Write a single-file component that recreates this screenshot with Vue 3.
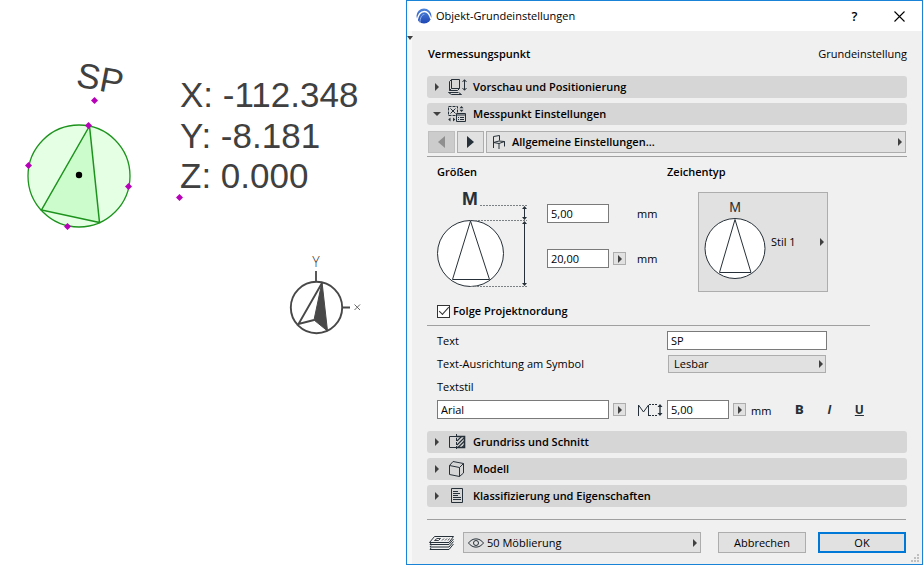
<script setup>
import { ref } from 'vue'

const handles = [
  [94, 100], [88, 125], [28, 165], [128, 186], [67, 226], [179, 197]
]
const coords = [
  { text: 'X: -112.348', y: 107 },
  { text: 'Y: -8.181', y: 148 },
  { text: 'Z: 0.000', y: 188 }
]

const textHeight = ref('5,00')
const symbolSize = ref('20,00')
const followNorth = ref(true)
const label = ref('SP')
const alignment = ref('Lesbar')
const font = ref('Arial')
const fontSize = ref('5,00')
const layer = ref('50 Möblierung')
</script>

<template>
  <main class="screen">
    <section class="plan" aria-label="Grundriss">
      <svg class="drawing" viewBox="0 0 406 565" width="406" height="565">
        <circle cx="79" cy="176" r="51" fill="#e4ffe4" stroke="#1d931d" stroke-width="1.3" />
        <path d="M89.500 126L41.500 210L99.500 222.500Z" fill="#ccfccc" stroke="#1d931d" stroke-width="1.5" />
        <circle cx="79" cy="175" r="3.200" fill="#000" />
        <text class="cad" x="75" y="86" transform="rotate(11 75 86)">SP</text>
        <text v-for="c in coords" :key="c.y" class="cad" x="180" :y="c.y">{{ c.text }}</text>
        <path
          v-for="h in handles" :key="h[0]"
          :d="`M${h[0] + 0.5} ${h[1] - 3}l3.500 3.500l-3.500 3.500l-3.500 -3.500z`" fill="#b800b8"
        />
        <g fill="none" stroke="#484848">
          <circle cx="316.500" cy="307.500" r="25.700" stroke-width="1.900" />
          <path d="M316 271V282M342 307.500H350" stroke-width="1.800" />
          <path d="M322 283L298.500 324L314 320" stroke-width="1.900" />
          <path d="M322 282L314 320L327.500 331Z" fill="#484848" />
        </g>
        <text class="axis" x="316" y="267">Y</text>
        <path d="M354.500 304.500l5.500 5.500M360 304.500l-5.500 5.500" stroke="#555" stroke-width="0.900" />
      </svg>
    </section>

    <section class="dialog" role="dialog" aria-labelledby="dialog-title">
      <header class="titlebar">
        <svg class="logo" viewBox="0 0 16 16" width="16" height="16">
          <defs>
            <linearGradient id="orb" x1="0" y1="0" x2="0" y2="1">
              <stop offset="0" stop-color="#4f86dc" /><stop offset="1" stop-color="#1f46b4" />
            </linearGradient>
          </defs>
          <circle cx="8" cy="8" r="7.500" fill="url(#orb)" />
          <path d="M1 13C2 6.500 4.500 3.500 8.500 3.500C11.500 3.500 13.500 6 15 11" fill="none" stroke="#fff" stroke-width="1.400" />
          <path d="M3.800 15C4.200 9.500 5.800 6.500 8.300 6.500" fill="none" stroke="#9dbdf0" stroke-width="0.900" />
        </svg>
        <h1 id="dialog-title">Objekt-Grundeinstellungen</h1>
        <button class="caption" type="button" aria-label="Hilfe">?</button>
        <button class="caption" type="button" aria-label="Schließen">
          <svg viewBox="0 0 11 11" width="11" height="11"><path d="M0.500 0.500L10.500 10.500M10.500 0.500L0.500 10.500" stroke="#000" stroke-width="1.100" /></svg>
        </button>
      </header>

      <div class="body">
        <div class="rail"><i class="tri down small"></i></div>
        <form class="content" @submit.prevent>
          <div class="object">
            <h2>Vermessungspunkt</h2>
            <span>Grundeinstellung</span>
          </div>

          <div class="panels">
            <button class="panel" type="button" aria-expanded="false">
              <i class="tri"></i>
              <svg class="icon" viewBox="0 0 20 20" width="20" height="20">
                <path d="M4.500 2.500H12.500V11.500H4.500ZM4.500 2.500L2.500 4.500V13.500L4.500 11.500M2.500 13.500H10.500L12.500 11.500M1.500 15.500H11M1.500 15.500L4.500 17.500H14.500L11.500 15.500" />
                <path d="M17.500 3V13M15.500 5L17.500 2.700L19.500 5M15.500 11L17.500 13.300L19.500 11" />
              </svg>
              <span>Vorschau und Positionierung</span>
            </button>
            <button class="panel" type="button" aria-expanded="true">
              <i class="tri down"></i>
              <svg class="icon" viewBox="0 0 20 20" width="20" height="20">
                <path d="M1.500 2.500H10.500V11.500H1.500Z" stroke-dasharray="3 1" />
                <path d="M3.500 4.500L8.500 9.500M8.500 4.500L3.500 9.500" />
                <path d="M12.500 4.300L14.500 2L16.500 4.300ZM12.500 5.700L14.500 8L16.500 5.700Z M3.500 13.500L1.200 15.500L3.500 17.500ZM6 13.500L8.300 15.500L6 17.500Z" fill="#263038" stroke="none" />
                <path d="M9.500 9.500H18.500V17.500H9.500ZM9.500 11H18.500" fill="#d6d6d6" />
                <path d="M11 13.500H12M13 13.500H17M11 15.500H12M13 15.500H17" />
              </svg>
              <span>Messpunkt Einstellungen</span>
            </button>
          </div>

          <nav class="pager">
            <button class="step" type="button" disabled aria-label="Zurück"><i class="tri left"></i></button>
            <button class="step" type="button" aria-label="Weiter"><i class="tri big"></i></button>
            <button class="page" type="button" aria-haspopup="menu">
              <svg class="icon" viewBox="0 0 14 16" width="14" height="16">
                <path d="M1.500 14V2.500L7.500 1.500V6.500M1.500 8.500L7 7L12.500 7.500L7 9.500L1.500 8.500M7 9.500V15M12.500 7.500V12.500" />
              </svg>
              <span>Allgemeine Einstellungen...</span>
              <i class="tri"></i>
            </button>
          </nav>

          <div class="general">
            <div class="columns">
              <section>
                <h3>Größen</h3>
                <div class="sizes">
                  <svg viewBox="0 -8 90 108" width="90" height="108">
                    <text class="mark" x="33" y="15">M</text>
                    <circle cx="33.500" cy="63.500" r="33" fill="#fff" stroke="#263038" />
                    <path d="M33.500 31L15.500 89.500H52.500Z" fill="none" stroke="#263038" />
                    <path d="M43 15.500H90M38 30.500H90M34 96.500H90" stroke="#7c8185" stroke-dasharray="2 1" />
                    <path d="M87.500 17V29M87.500 32V95" stroke="#263038" />
                    <path d="M85 19L87.500 16L90 19ZM85 27L87.500 30L90 27ZM85 34L87.500 31L90 34ZM85 93L87.500 96L90 93Z" fill="#263038" />
                  </svg>
                  <div class="dims">
                    <div class="dim">
                      <input id="text-height" v-model="textHeight" class="short" type="text" aria-label="Texthöhe">
                      <label class="unit" for="text-height">mm</label>
                    </div>
                    <div class="dim">
                      <input id="symbol-size" v-model="symbolSize" class="short" type="text" aria-label="Symbolgröße">
                      <button class="mini" type="button" aria-label="Größe wählen"><i class="tri"></i></button>
                      <label class="unit" for="symbol-size">mm</label>
                    </div>
                  </div>
                </div>
              </section>
              <section>
                <h3>Zeichentyp</h3>
                <button class="style" type="button" aria-haspopup="menu">
                  <svg viewBox="0 -8 62 96" width="62" height="96">
                    <text class="mark light" x="31" y="10">M</text>
                    <circle cx="31" cy="46.500" r="30" fill="#fff" stroke="#263038" />
                    <path d="M31 17.500L15.500 70.500H47Z" fill="none" stroke="#263038" />
                  </svg>
                  <span>Stil 1</span>
                  <i class="tri"></i>
                </button>
              </section>
            </div>

            <label class="check">
              <input v-model="followNorth" type="checkbox">
              <span>Folge Projektnordung</span>
            </label>
          </div>

          <hr class="inner">

          <div class="text">
            <div class="field">
              <label for="label-text">Text</label>
              <input id="label-text" v-model="label" class="medium" type="text">
            </div>
            <div class="field">
              <label for="alignment">Text-Ausrichtung am Symbol</label>
              <div class="picker medium">
                <select id="alignment" v-model="alignment"><option>Lesbar</option></select>
                <i class="tri"></i>
              </div>
            </div>
            <label class="caption-row" for="font">Textstil</label>
            <div class="fontrow">
              <input id="font" v-model="font" class="long" type="text">
              <button class="mini" type="button" aria-label="Schrift wählen"><i class="tri"></i></button>
              <svg class="icon height" viewBox="0 0 25 14" width="25" height="14">
                <path d="M0.500 13V2L5.500 9L10.500 2V13" />
                <path d="M11 1.500H20M11 12.500H20" stroke-dasharray="2 1" />
                <path d="M22 2V12" stroke-width="1.300" />
                <path d="M19.500 4L22 1L24.500 4ZM19.500 10L22 13L24.500 10Z" fill="#263038" stroke="none" />
              </svg>
              <input id="font-size" v-model="fontSize" class="short" type="text" aria-label="Schriftgröße">
              <button class="mini" type="button" aria-label="Schriftgröße wählen"><i class="tri"></i></button>
              <label class="fontunit" for="font-size">mm</label>
              <div class="format">
                <button type="button" class="bold">B</button>
                <button type="button" class="italic">I</button>
                <button type="button" class="underline">U</button>
              </div>
            </div>
          </div>

          <div class="panels">
            <button class="panel" type="button" aria-expanded="false">
              <i class="tri"></i>
              <svg class="icon" viewBox="0 0 20 20" width="20" height="20">
                <path d="M9.500 4.500H2.500V15.500H9.500" />
                <path d="M9.500 2V18" stroke-dasharray="3 1" />
                <path d="M9 4.500H17.500V15.500H9" stroke-width="1.600" />
                <path d="M10 9L14.500 4.500M10 13L17.500 5.500M11 15.500L17.500 9M15 15.500L17.500 13" stroke-width="1.100" />
              </svg>
              <span>Grundriss und Schnitt</span>
            </button>
            <button class="panel" type="button" aria-expanded="false">
              <i class="tri"></i>
              <svg class="icon" viewBox="0 0 20 20" width="20" height="20">
                <path d="M2.500 6.500L12.500 8.500V17.500L2.500 15.500ZM2.500 6.500L6 2.500L16.500 4.500L12.500 8.500M16.500 4.500V14L12.500 17.500" />
              </svg>
              <span>Modell</span>
            </button>
            <button class="panel" type="button" aria-expanded="false">
              <i class="tri"></i>
              <svg class="icon" viewBox="0 0 20 20" width="20" height="20">
                <path d="M4.500 2.500H15.500V16.500H4.500ZM6 5.500H11M6 7.500H13M6 9.500H11M6 11.500H14M6 13.500H14" />
              </svg>
              <span>Klassifizierung und Eigenschaften</span>
            </button>
          </div>

          <hr class="outer">

          <footer class="footer">
            <svg class="icon" viewBox="0 0 26 16" width="26" height="16">
              <path d="M0.500 7.500L5.500 1.500H24.500L20 7.500Z M1 9.500H20L24.500 4M1 12H20L24.500 6.500M1 14.500H20L24.500 9M1 9.500L2 8M1 12L2 10.500M1 14.500L2 13" />
              <path d="M5.500 5.500L8 3.500H11.500L9.500 5.500ZM13 5.500L15 3.500M16 5.500L18 3.500M19 5.500L20.500 3.500" stroke-width="0.900" />
            </svg>
            <div class="picker layer">
              <svg class="icon eye" viewBox="0 0 16 10" width="16" height="10">
                <path d="M0.500 5C4.500 -0.500 11.500 -0.500 15.500 5C11.500 10.500 4.500 10.500 0.500 5Z" />
                <circle cx="8" cy="5" r="2.500" />
              </svg>
              <select v-model="layer" aria-label="Ebene"><option>50 Möblierung</option></select>
              <i class="tri"></i>
            </div>
            <button class="action" type="button">Abbrechen</button>
            <button class="action primary" type="submit">OK</button>
          </footer>
        </form>
        <svg class="grip" viewBox="0 0 8 8" width="8" height="8">
          <path d="M6 0h2v2h-2zM3 3h2v2h-2zM6 3h2v2h-2zM0 6h2v2h-2zM3 6h2v2h-2zM6 6h2v2h-2z" fill="#bfbfbf" />
        </svg>
      </div>
    </section>
  </main>
</template>

<style>
body { background: #fff; }
</style>

<style scoped>
.screen {
  display: grid;
  grid-template-columns: minmax(380px, 406fr) minmax(517px, 517fr);
  min-height: 100vh;
  font-family: "Open Sans", "Noto Sans", sans-serif;
  font-size: 11px;
  line-height: 16px;
  color: #000;
}
.screen *, .screen *::before { box-sizing: border-box; }
.plan { overflow: hidden; }
.drawing { display: block; }
.cad { font-family: "Liberation Sans", Arial, sans-serif; font-size: 35px; fill: #404040; }
.axis { font-size: 14px; font-weight: 300; fill: #333; text-anchor: middle; }

.dialog {
  display: flex;
  flex-direction: column;
  border: 1px solid #1883d7;
  background: #f0f0f0;
}
button, input, select { font: inherit; color: inherit; margin: 0; }
h1, h2, h3 { margin: 0; font-size: inherit; font-weight: 600; }
button { padding: 0; border: 0; background: none; text-align: left; }
button, select { cursor: default; }

.titlebar {
  display: flex;
  align-items: center;
  height: 30px;
  padding-left: 9px;
  background: #fff;
}
.logo { margin-right: 4px; }
.titlebar h1 { flex: 1; font-weight: 400; }
.caption {
  display: flex;
  align-items: center;
  justify-content: center;
  width: 45px;
  height: 30px;
  font-size: 13px;
  font-weight: 600;
}

.body { position: relative; display: flex; flex: 1; }
.rail { display: flex; justify-content: center; width: 5px; padding-top: 5px; background: #f8f8f8; }
.content { flex: 1; padding: 15px 15px 11px; }
.object { display: flex; justify-content: space-between; margin-bottom: 14px; padding-left: 1px; }

.tri {
  flex: none;
  width: 0;
  height: 0;
  border: 4px solid transparent;
  border-left-color: #404040;
  border-right-width: 0;
}
.tri.down { border: 4px solid transparent; border-top-color: #404040; border-bottom-width: 0; }
.tri.small { border-width: 4px 3px 0; }
.tri.big { border-width: 6px 0 6px 7px; border-left-color: #263038; }
.tri.left { border: 6px solid transparent; border-right: 7px solid #8f8f8f; border-left-width: 0; }
.icon { flex: none; fill: none; stroke: #263038; }

.panels { display: flex; flex-direction: column; gap: 5px; }
.panel {
  display: grid;
  grid-template-columns: 12px 20px 1fr;
  align-items: center;
  height: 22px;
  padding-left: 8px;
  border-radius: 3px;
  background: #d6d6d6;
  font-weight: 600;
}
.panel .tri.down { margin-left: -2px; }
.panel span { padding-left: 6px; }

.pager {
  display: flex;
  gap: 2px;
  margin-top: 6px;
  padding: 0 1px 3px;
  border-bottom: 1px solid #a0a0a0;
}
.step, .page, .style, .mini, .action { border: 1px solid #adadad; background: #e1e1e1; }
.step { display: flex; align-items: center; justify-content: center; width: 27px; height: 22px; }
.step:disabled { background: #ccc; border-color: #bfbfbf; }
.page { display: flex; flex: 1; align-items: center; padding: 0 3px 0 5px; font-weight: 600; }
.page span { flex: 1; padding-left: 6px; }

.general { padding: 7px 0 6px 10px; }
.columns { display: grid; grid-template-columns: 230px 1fr; }
.sizes { display: flex; gap: 20px; padding-top: 2px; }
.mark {
  font-family: "Liberation Sans Narrow", "Liberation Sans", sans-serif;
  font-size: 19px;
  font-weight: 700;
  fill: #263038;
  text-anchor: middle;
}
.mark.light { font-size: 14px; font-weight: 400; }
.dims { display: flex; flex-direction: column; gap: 26px; padding-top: 22px; }
.dim { display: grid; grid-template-columns: 66px 24px auto; align-items: center; }
.unit { grid-column: 3; }
input[type="text"] {
  height: 19px;
  padding: 0 3px;
  border: 1px solid #7a7a7a;
  border-radius: 0;
  background: #fff;
}
.short { width: 62px; }
.medium { width: 160px; }
.long { width: 172px; }
.mini { display: flex; align-items: center; justify-content: center; width: 13px; height: 13px; }
.style {
  display: flex;
  align-items: center;
  width: 130px;
  height: 100px;
  margin: 12px 0 0 31px;
  padding: 0 3px 0 5px;
}
.style span { flex: 1; padding-left: 5px; }
.check { display: flex; align-items: center; gap: 3px; width: max-content; margin-top: 11px; font-weight: 600; }
.check input {
  appearance: none;
  display: grid;
  place-items: center;
  width: 13px;
  height: 13px;
  border: 1px solid #333;
  background: #fff;
}
.check input:checked::before {
  content: "";
  width: 10px;
  height: 5px;
  margin-bottom: 3px;
  border: solid #333;
  border-width: 0 0 1px 1px;
  transform: rotate(-48deg);
}

hr { height: 1px; margin: 0; border: 0; background: #a0a0a0; }
.inner { margin-right: 37px; }
.text { padding: 3px 0 12px 10px; }
.field { display: grid; grid-template-columns: 230px 1fr; align-items: center; height: 23px; }
.picker { position: relative; display: flex; align-items: center; }
.picker select {
  appearance: none;
  width: 100%;
  height: 18px;
  padding: 0 16px 0 5px;
  border: 1px solid #adadad;
  border-radius: 0;
  background: #e1e1e1;
}
.picker.medium { padding: 0 1px; }
.picker .tri { position: absolute; right: 4px; pointer-events: none; }
.caption-row { display: flex; align-items: center; height: 23px; }
.fontrow { display: flex; align-items: center; gap: 4px; padding-top: 2px; }
.height { margin: 0 0 0 8px; }
.fontunit { padding: 2px 0 0 1px; }
.format { display: flex; gap: 10px; margin-left: 14px; }
.format button {
  width: 20px;
  font-size: 12px;
  font-weight: 700;
  text-align: center;
  color: #263038;
}
.format .bold { font-family: Roboto, sans-serif; font-size: 13px; font-weight: 900; }
.format .italic { font-style: italic; }
.format .underline { text-decoration: underline; }

.outer { margin: 12px 1px 12px 0; }
.footer { display: flex; align-items: center; padding: 0 1px 0 2px; }
.layer { flex: 1; margin: 0 17px 0 8px; }
.picker.layer select { height: 21px; padding-left: 23px; }
.eye { position: absolute; left: 5px; }
.action { width: 88px; height: 21px; text-align: center; }
.action + .action { margin-left: 12px; }
.action.primary { border: 2px solid #0078d7; }
.grip { position: absolute; right: 3px; bottom: 2px; }
</style>
